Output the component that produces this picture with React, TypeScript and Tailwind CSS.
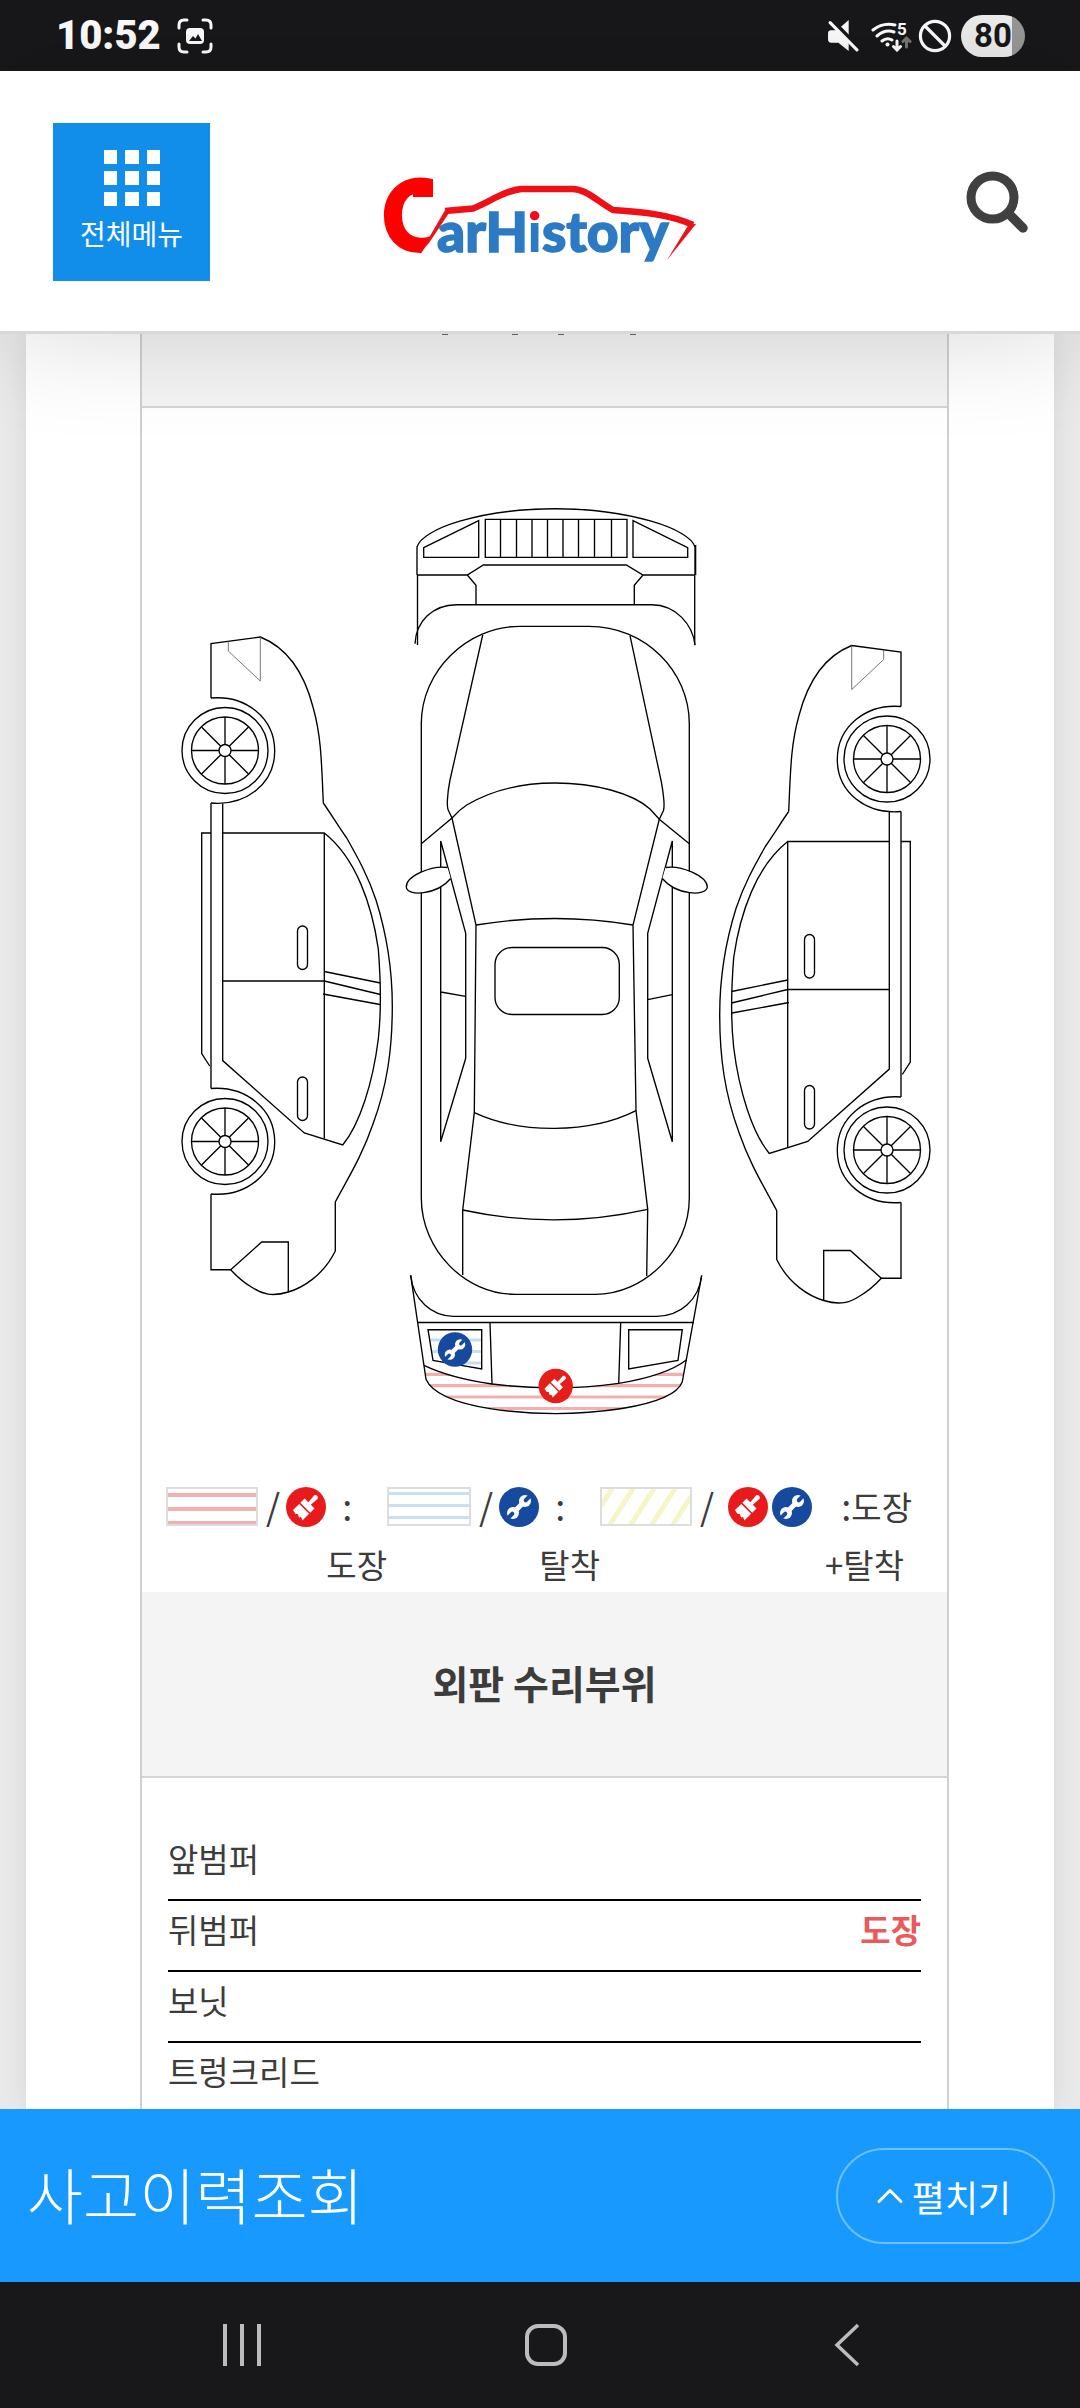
import { ChevronUp } from "lucide-react";

const parts = [
  { name: "앞범퍼", status: "" },
  { name: "뒤범퍼", status: "도장" },
  { name: "보닛", status: "" },
  { name: "트렁크리드", status: "" },
];

/* ================= BADGES ================= */

function BrushShape({ color }: { color: string }) {
  return (
    <g>
      <circle r="20" fill={color} />
      <g transform="rotate(45)" fill="#fff">
        <path d="M-2.4 -14.5 Q0 -17 2.4 -14.5 L1.8 -5 H7 V1 H-7 V-5 H-1.8 Z" />
        <path d="M-7 2.6 H7 V12 L3.6 10.6 L2.6 12.4 L-0.8 10.8 L-2.4 12.4 L-7 11.4 Z" />
      </g>
    </g>
  );
}

function WrenchShape() {
  return (
    <g>
      <circle r="20" fill="#164a9f" />
      <g transform="rotate(45)">
        <path d="M0 -8 V8" stroke="#fff" strokeWidth="5" />
        <circle cy="-8.5" r="6" fill="#fff" />
        <circle cy="8.5" r="6" fill="#fff" />
        <path
          d="M0 -16 V-9.5 M0 16 V9.5"
          stroke="#164a9f"
          strokeWidth="4"
          strokeLinecap="round"
        />
      </g>
    </g>
  );
}

function BrushBadge() {
  return (
    <svg viewBox="-20 -20 40 40" className="h-10 w-10 shrink-0">
      <BrushShape color="#e81a1c" />
    </svg>
  );
}

function WrenchBadge() {
  return (
    <svg viewBox="-20 -20 40 40" className="h-10 w-10 shrink-0">
      <WrenchShape />
    </svg>
  );
}

/* ================= CAR DIAGRAM ================= */

function Wheel({ cy }: { cy: number }) {
  return (
    <g transform={`translate(225 ${cy})`}>
      <circle r="43" />
      <circle r="33.5" />
      <circle r="6" />
      <path d="M0 -6 V-33.5 M0 6 V33.5 M-6 0 H-33.5 M6 0 H33.5 M4.2 -4.2 L23.5 -23.5 M-4.2 -4.2 L-23.5 -23.5 M4.2 4.2 L23.5 23.5 M-4.2 4.2 L-23.5 23.5" />
    </g>
  );
}

function CarSide() {
  return (
    <g>
      <path d="M211 698 V643.5 L260.3 637 C278 644 301 661 313 707 C321 735 321.5 760 323.3 803" />
      <path d="M323.3 803 C331 814 337 824 346.7 838 C358 858 368 876 376 900 C386 932 392.3 966 392.3 1006 C392.3 1050 387 1086 373 1124 C362 1156 348 1178 335.3 1202 V1251 C323 1276 302 1288 288.3 1292 C272 1297 262 1294 253 1288 Q241 1281 230.7 1269.7 H211 V1194" />
      <path d="M228.3 641.5 V651 L260.3 681 V637" stroke="#666" strokeWidth="0.9" />
      <path d="M211 698 C246 695 274.7 718 274.7 751 C274.7 784 246 806 211 803" />
      <path d="M211 1088.5 C246 1086 274.7 1109 274.7 1142 C274.7 1174 246 1197 211 1194" />
      <Wheel cy={750.5} />
      <Wheel cy={1141.5} />
      <path d="M211 803 V1088.5 M222.7 803.5 V1060.6 L304.3 1133 L342.7 1145 C360 1124 373 1082 378.3 1039 C381 1015 381.5 990 378.3 949 C372 905 356 858 324.3 833 H222.7" />
      <path d="M211 833 H201.7 V1053.5 L209.7 1066" />
      <path d="M324.3 833 V1138.5 M222.7 981 H324.3" />
      <path d="M324.3 971.5 L380.4 983 M324.3 981 L380.5 994.5 M323 994 L380 1004.5" />
      <rect x="297.5" y="926" width="10" height="43.5" rx="5" />
      <rect x="297.5" y="1077" width="10" height="43.5" rx="5" />
      <path d="M230.7 1269.7 L261.7 1242 H288.3 V1292" />
    </g>
  );
}

function CarDiagram() {
  return (
    <svg
      viewBox="142 408 805 1079"
      className="block w-full"
      fill="none"
      stroke="#000"
      strokeWidth="1.35"
      role="img"
      aria-label="외판 수리부위"
    >
      <defs>
        <clipPath id="rear-lamp">
          <path d="M428 1329.7 H481.7 V1369 L433 1360.3 Z" />
        </clipPath>
        <clipPath id="rear-bumper">
          <path d="M424 1365.3 C440 1373 465 1380 492 1384 C532 1389 578 1389 618.7 1383.3 C645 1379 672 1371 686.7 1359.7 L682.3 1381.7 C678 1394 655 1403 622 1408.5 C580 1415 532 1415 490 1408.7 C455 1403 432 1393 426 1379.3 Z" />
        </clipPath>
      </defs>

      <CarSide />
      <g transform="translate(1112 8.5) scale(-1 1)">
        <CarSide />
      </g>

      {/* front bumper */}
      <path d="M417 575 V547 C422 529 480 509 555 508.7 C630 509 690 529 695 547" />
      <path d="M695.3 545 V575" strokeWidth="2" />
      <path d="M417 575 H467.3 L483.3 565 H626.3 L643 575 H695 M467.3 575 L476 585.3 V604.7 M643 575 L634.3 585.3 V604.7" />
      <path d="M417.5 575 V645 M694.7 575 V645" />
      <path d="M415 643.7 C416 622 432 604.7 456.7 604.7 H651.7 C676 604.7 693 625 695 645.3" />
      <path d="M423.7 547.7 L478.7 520.7 V557.3 H423.7 Z M633 520.7 L687.7 547.7 V557.3 H633 Z" />
      <path d="M485.3 519.3 H627 V557.3 H485.3 Z M500.5 519.3 V557.3 M516.5 519.3 V557.3 M532 519.3 V557.3 M547.5 519.3 V557.3 M563 519.3 V557.3 M578.5 519.3 V557.3 M594.5 519.3 V557.3 M611.5 519.3 V557.3" />

      {/* body */}
      <path d="M421.3 723.5 C421.3 671 467 626.3 520 626.3 H589 C645 626.3 689.3 671 689.3 723.5 V1198 C689.3 1250 645 1294.3 595 1294.3 H515 C465 1294.3 421.3 1250 421.3 1198 Z" />
      <path d="M482.7 635 L450 780 C447 795 446.5 808 448.7 811 L452 818 L476 925 L474.3 1112.7 L462.7 1210 V1275" />
      <path d="M630 635.7 L661.3 781.7 C664 797 664.5 808 663.3 811 L659.3 819.3 L633 925 L636 1110.7 L647.7 1209.3 L646.7 1276" />
      <path d="M421.3 843.7 L452 818 Q459 810 466.7 805 C492 790 522 783 555 783 C595 783 632 793 650 809 L659.3 819.3 L689.3 843.7" />
      <path d="M476 925 Q555 912 633 925 M474.3 1112.7 C520 1134 590 1134 636 1110.7 M462.7 1210 Q555 1230 647.7 1209.3" />
      <rect x="495" y="947.5" width="124.3" height="67" rx="17" />
      <path d="M440.7 841 V1141.7 L465.7 1058.3 V933.3 Z M672.3 841 V1141.7 L647.7 1058.3 V933.3 Z M440.7 992 L465.7 996.3 M647.7 999.7 L672.3 994.7" />
      <path fill="#fff" d="M447.5 867.5 C432 865 406 876 406.3 887 C407 897 437 895 450.7 878.5" />
      <path fill="#fff" d="M665.5 867.5 C681 865 707 876 707.3 887 C706 897 676 895 662.3 878.5" />

      {/* rear bumper with repair marks */}
      <g clipPath="url(#rear-lamp)" stroke="#c5dff2" strokeWidth="3">
        <path d="M428 1340 H482 M428 1351.5 H482 M428 1363 H482" />
      </g>
      <g clipPath="url(#rear-bumper)" stroke="#f3aeb0" strokeWidth="3.2">
        <path d="M420 1374.3 H690 M420 1385.7 H690 M420 1397 H690 M420 1408.5 H690" />
      </g>
      <path d="M410.7 1275.3 L426 1379.3 C432 1393 455 1403 490 1408.7 C532 1415 580 1415 622 1408.5 C655 1403 678 1394 682.3 1381.7 L701.7 1275.3" />
      <path d="M410.7 1275.3 C413 1300 432 1316.3 453.3 1316.3 H656.7 C680 1316.3 699 1300 701.7 1275.3" />
      <path d="M417.7 1322.5 H694 M490 1322.5 L492 1384 M620.7 1322.5 L618.7 1383.3" />
      <path d="M424 1365.3 C440 1373 465 1380 492 1384 C532 1389 578 1389 618.7 1383.3 C645 1379 672 1371 686.7 1359.7" />
      <path d="M428 1329.7 H481.7 V1369 L433 1360.3 Z M628.7 1329.7 H682.3 L678 1360.3 L628.7 1369 Z" />
      <g stroke="none" transform="translate(455 1349.5) scale(0.86)">
        <WrenchShape />
      </g>
      <g stroke="none" transform="translate(555.7 1386) scale(0.86)">
        <BrushShape color="#e61e19" />
      </g>
    </svg>
  );
}

/* ================= LOGO ================= */

function Logo() {
  return (
    <svg viewBox="380 170 320 108" className="block h-27 w-80" role="img" aria-label="CarHistory">
      <defs>
        {/* red dot over a blue stem */}
        <linearGradient id="logo-i" gradientUnits="userSpaceOnUse" x1="0" y1="200" x2="0" y2="260">
          <stop offset="0.36" stopColor="#f00d14" />
          <stop offset="0.36" stopColor="#2c7ac4" />
        </linearGradient>
      </defs>
      <text
        x="381"
        y="251"
        fill="#fe0000"
        stroke="#fe0000"
        strokeWidth="3"
        className="font-['Lato',sans-serif] text-[98px] font-black"
      >
        C
      </text>
      <path d="M412 179 H432 V197 H412 Z" fill="#fe0000" />
      <path d="M432 172 H470 V262 H415 L447 209 H432 Z" fill="#fff" />
      <path d="M419 253 L445 208.5 L448 213 L428 243 Z" fill="#e8141a" />
      <path
        d="M444 211 L472 208.5 C490 201 503 191 520 189 H570 C584 188 596 201 612 210 C640 212 668 214 692 225"
        fill="none"
        stroke="#ee1016"
        strokeWidth="6.5"
      />
      <path d="M688 224 L695 224 L666 260 Z" fill="#e8141a" />
      <text
        x="436"
        y="252"
        fill="#2c7ac4"
        stroke="#2c7ac4"
        strokeWidth="1.5"
        className="font-['Lato',sans-serif] text-[55px] font-black"
      >
        arH
        <tspan fill="url(#logo-i)" stroke="none">
          i
        </tspan>
        story
      </text>
    </svg>
  );
}

/* ================= STATUS BAR ================= */

function StatusBar() {
  return (
    <div className="flex h-[71px] items-center justify-between bg-[#18181a] pr-[55px] pl-14 text-white">
      <div className="flex items-center gap-4">
        <span className="font-['Roboto',sans-serif] text-[40px] font-black leading-none">10:52</span>
        <svg viewBox="0 0 36 36" className="h-9 w-9" fill="none" stroke="#fff" strokeWidth="3" strokeLinecap="round">
          <path d="M2 10 V7 Q2 2 7 2 H10 M26 2 H29 Q34 2 34 7 V10 M34 26 V29 Q34 34 29 34 H26 M10 34 H7 Q2 34 2 29 V26" />
          <rect x="9" y="10" width="18" height="16" rx="4" fill="#fff" stroke="none" />
          <path d="M12 23 L16 18 L18.5 20.5 L21 16 L25 23 Z" fill="#18181a" stroke="none" />
        </svg>
      </div>

      <div className="flex items-center">
        {/* muted */}
        <svg viewBox="827 20 31 31" className="h-8 w-8" fill="#fff">
          <path d="M828 33 Q828 30 831 30 H836 L848 42 V50 L838 42 H831 Q828 42 828 39 Z M840 27 L848 20 V35 Z" />
          <path d="M832 20.5 L858 47" stroke="#18181a" strokeWidth="4" />
          <path d="M830 22.5 L856 49" stroke="#fff" strokeWidth="3" strokeLinecap="round" />
        </svg>
        {/* wifi */}
        <svg viewBox="872 20 41 32" className="ml-3 h-8 w-[41px]" fill="none" stroke="#fff" strokeWidth="3" strokeLinecap="round">
          <path d="M874 30 Q884 22 896 25 M878 36 Q886 29 895 32 M883 41 Q888 37 893 40" />
          <circle cx="888.5" cy="44.5" r="2" fill="#fff" stroke="none" />
          <path d="M898 41 V49 M894.5 46.5 L898 50 L901.5 46.5" />
          <path d="M907.5 47 V39 M904 41.5 L907.5 38 L911 41.5" stroke="#777" />
          <text x="898" y="35" fill="#fff" stroke="none" className="font-['Roboto',sans-serif] text-[17px] font-bold">
            5
          </text>
        </svg>
        {/* blocked */}
        <svg viewBox="0 0 34 34" className="ml-[6px] h-[34px] w-[34px]" fill="none" stroke="#fff" strokeWidth="3.2">
          <circle cx="17" cy="17" r="14.6" />
          <path d="M7 7 L27 27" />
        </svg>
        <div className="ml-[9px] flex h-[42px] w-16 items-center justify-center rounded-full bg-linear-to-r from-[#efefef] from-80% to-[#999] to-80% font-['Roboto',sans-serif] text-[33px] font-bold leading-none text-[#18181a]">
          80
        </div>
      </div>
    </div>
  );
}

export default function App() {
  return (
    <div className="flex min-h-screen flex-col overflow-hidden bg-[#e9e9e9] font-['Noto_Sans_CJK_KR',sans-serif] text-[#3c3c3c]">
      <StatusBar />

      {/* ================= HEADER ================= */}
      <header className="relative z-10 grid h-[263px] grid-cols-[1fr_auto_1fr] items-start border-b-3 border-[#d8d8d8] bg-white pr-[52px] pl-[53px] shadow-[0_0_110px_rgba(0,0,0,0.16)]">
        <button className="mt-[52px] flex h-[158px] w-[157px] flex-col items-center bg-[#118eea] pt-[27px] text-white">
          <svg viewBox="0 0 56 56" className="h-14 w-14" fill="#fff">
            <path d="M0 0h13v14H0z M21 0h14v14H21z M43 0h13v14H43z M0 21h13v14H0z M21 21h14v14H21z M43 21h13v14H43z M0 42h13v14H0z M21 42h14v14H21z M43 42h13v14H43z" />
          </svg>
          <span className="mt-[7px] text-[28px] leading-10">전체메뉴</span>
        </button>

        <a href="#" className="mt-[99px]">
          <Logo />
        </a>

        <button aria-label="검색" className="mt-[100px] justify-self-end">
          <svg viewBox="0 0 62 62" className="h-[62px] w-[62px]" fill="none" stroke="#404040">
            <circle cx="26.5" cy="26.5" r="21.5" strokeWidth="9" />
            <path d="M42 42 L57 57" strokeWidth="9.5" strokeLinecap="round" />
          </svg>
        </button>
      </header>

      {/* ================= REPORT ================= */}
      <main className="px-[26px]">
        <div className="bg-white pr-[105px] pl-[114px] shadow-[0_0_24px_rgba(0,0,0,0.08)]">
          <div className="border-x-2 border-[#d0d0d0]">
            <div className="h-[74px] border-b-2 border-[#d4d4d4] bg-[#f4f4f4]">
              <svg viewBox="142 334 805 2" className="block w-full" fill="#666">
                <path d="M442 334h6v1h-6z M512 334h6v1h-6z M558 334h6v1h-6z M630 334h6v1h-6z" />
              </svg>
            </div>

            <CarDiagram />

            {/* legend */}
            <div className="flex pb-1 pl-6 text-[33px]">
              <div className="w-[221px]">
                <div className="flex h-[39px] items-center">
                  <span className="h-[39px] w-[92px] border-2 border-[#ddd] bg-[repeating-linear-gradient(180deg,#fff_0px,#fff_4px,#f2b0b0_4px,#f2b0b0_8px,#fff_8px,#fff_14px)]" />
                  <span className="ml-2 pb-1 text-[36px] leading-none">/</span>
                  <span className="ml-[6px] flex">
                    <BrushBadge />
                  </span>
                  <span className="ml-4 pb-1 text-[36px] leading-none">:</span>
                </div>
                <p className="mt-[14px] text-right leading-[48px]">도장</p>
              </div>

              <div className="w-[213px]">
                <div className="flex h-[39px] items-center">
                  <span className="h-[39px] w-[84px] border-2 border-[#ddd] bg-[repeating-linear-gradient(180deg,#fff_0px,#fff_3px,#c9e0f3_3px,#c9e0f3_6px,#fff_6px,#fff_12px)]" />
                  <span className="ml-2 pb-1 text-[36px] leading-none">/</span>
                  <span className="ml-[6px] flex">
                    <WrenchBadge />
                  </span>
                  <span className="ml-4 pb-1 text-[36px] leading-none">:</span>
                </div>
                <p className="mt-[14px] text-right leading-[48px]">탈착</p>
              </div>

              <div className="w-[312px]">
                <div className="flex h-[39px] items-center">
                  <svg viewBox="0 0 92 39" className="h-[39px] w-[92px]" fill="none">
                    <path
                      d="M-12 39 L13 0 M9 39 L34 0 M30 39 L55 0 M51 39 L76 0 M72 39 L97 0"
                      stroke="#f5f5c6"
                      strokeWidth="5"
                    />
                    <rect x="1" y="1" width="90" height="37" stroke="#ddd" strokeWidth="2" />
                  </svg>
                  <span className="ml-2 pb-1 text-[36px] leading-none">/</span>
                  <span className="ml-[14px] flex gap-1">
                    <BrushBadge />
                    <WrenchBadge />
                  </span>
                  <span className="ml-auto pb-1 text-[36px] leading-none">:</span>
                  <span className="leading-none">도장</span>
                </div>
                <p className="mt-[14px] pr-2 text-right leading-[48px]">+탈착</p>
              </div>
            </div>

            <h2 className="flex h-[186px] items-center justify-center border-b-2 border-[#d4d4d4] bg-[#f4f4f4] pb-1 text-[39px] font-bold">
              외판 수리부위
            </h2>

            <div className="px-[26px] pt-[52px]">
              <table className="w-full border-separate border-spacing-0 text-[33px] leading-[56px]">
                <tbody>
                  {parts.map((part) => (
                    <tr key={part.name} className="group">
                      <th
                        scope="row"
                        className="h-[71px] border-b-2 border-black p-0 text-left align-top font-normal group-last:h-[66px] group-last:border-b-0"
                      >
                        {part.name}
                      </th>
                      <td className="border-b-2 border-black p-0 text-right align-top font-bold text-[#ea5a5c] group-last:border-b-0">
                        {part.status}
                      </td>
                    </tr>
                  ))}
                </tbody>
              </table>
            </div>
          </div>
        </div>
      </main>

      {/* ================= BOTTOM BAR ================= */}
      <div className="relative z-10 flex h-[173px] items-center justify-between bg-[#1899fd] pr-[25px] pl-[27px] text-white">
        <p className="pb-1 text-[61px] font-light leading-none">사고이력조회</p>
        <button className="flex h-24 w-[219px] items-center justify-center rounded-full border-2 border-[#6fc1fe] pr-3 text-[36px]">
          <ChevronUp size={44} strokeWidth={1.6} />
          펼치기
        </button>
      </div>

      {/* ================= SYSTEM NAV ================= */}
      <nav className="flex h-[126px] items-center bg-[#18181a] px-[220px]">
        <div className="flex w-full items-center justify-between">
          <button aria-label="최근 앱" className="flex h-[42px] w-11 justify-center gap-[13px]">
            <span className="w-[4px] bg-[#bdbbbf]" />
            <span className="w-[4px] bg-[#bdbbbf]" />
            <span className="w-[4px] bg-[#bdbbbf]" />
          </button>
          <button aria-label="홈" className="h-[42px] w-[42px] rounded-[13px] border-4 border-[#bdbbbf]" />
          <button aria-label="뒤로">
            <svg viewBox="-7 0 33 44" className="h-11 w-[33px]" fill="none" stroke="#bdbbbf" strokeWidth="3.5">
              <path d="M24 2 L3 22 L24 42" />
            </svg>
          </button>
        </div>
      </nav>
    </div>
  );
}
